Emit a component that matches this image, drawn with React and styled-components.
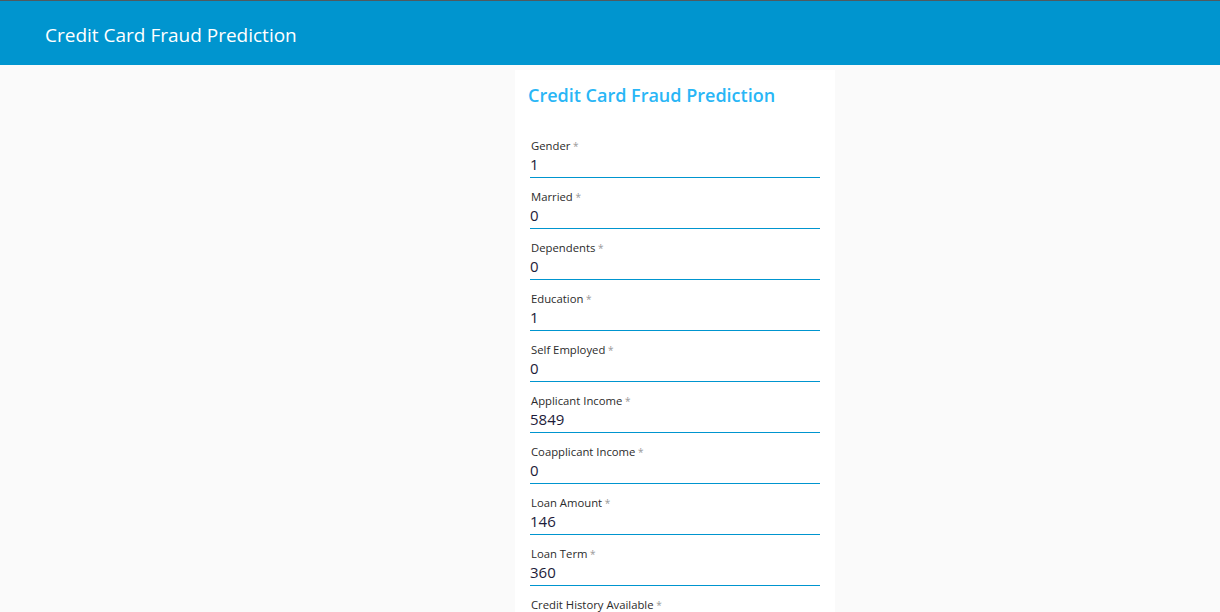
import React, { useState } from "react";
import styled, { createGlobalStyle } from "styled-components";

const fields = [
  { name: "gender", label: "Gender", value: "1" },
  { name: "married", label: "Married", value: "0" },
  { name: "dependents", label: "Dependents", value: "0" },
  { name: "education", label: "Education", value: "1" },
  { name: "selfEmployed", label: "Self Employed", value: "0" },
  { name: "applicantIncome", label: "Applicant Income", value: "5849" },
  { name: "coapplicantIncome", label: "Coapplicant Income", value: "0" },
  { name: "loanAmount", label: "Loan Amount", value: "146" },
  { name: "loanTerm", label: "Loan Term", value: "360" },
  { name: "creditHistory", label: "Credit History Available", value: "1" },
  { name: "propertyArea", label: "Property Area", value: "2" },
];

function App() {
  const [form, setForm] = useState(
    Object.fromEntries(fields.map((f) => [f.name, f.value]))
  );

  const onChange = (e) => setForm({ ...form, [e.target.name]: e.target.value });

  return (
    <>
      <GlobalStyle />
      <Header>
        <HeaderTitle>Credit Card Fraud Prediction</HeaderTitle>
      </Header>
      <Main>
        <Card>
          <Title>Credit Card Fraud Prediction</Title>
          <Form>
            {fields.map((f) => (
              <Field key={f.name}>
                <Label htmlFor={f.name}>
                  {f.label}
                  <Star> *</Star>
                </Label>
                <Input
                  id={f.name}
                  name={f.name}
                  value={form[f.name]}
                  onChange={onChange}
                />
              </Field>
            ))}
            <Submit type="button">Predict</Submit>
          </Form>
        </Card>
      </Main>
    </>
  );
}

const GlobalStyle = createGlobalStyle`
  body {
    margin: 0;
    background: #fafafa;
    font-family: "Open Sans", "Noto Sans", sans-serif;
  }
`;

const Header = styled.header`
  display: flex;
  align-items: center;
  box-sizing: border-box;
  height: 65px;
  padding: 3px 45px 0;
  background: #0095cf;
  border-top: 1px solid #4f5a60;
`;

const HeaderTitle = styled.h1`
  margin: 0;
  font-size: 19px;
  font-weight: 400;
  color: #fff;
`;

const Main = styled.main`
  display: grid;
  grid-template-columns: 515fr 320px 385fr;
  padding-top: 5px;
`;

const Card = styled.div`
  grid-column: 2;
  box-sizing: border-box;
  background: #fff;
  padding: 13px 15px 20px 13px;
`;

const Title = styled.h2`
  margin: 0 0 20px;
  font-size: 18px;
  line-height: 24px;
  font-weight: 600;
  color: #29b6f6;
`;

const Form = styled.form`
  display: flex;
  flex-direction: column;
  padding-left: 2px;
`;

const Field = styled.div`
  display: flex;
  flex-direction: column;
  padding-top: 11px;
`;

const Label = styled.label`
  font-size: 11.3px;
  line-height: 16px;
  color: #2b2b2b;
  padding-left: 1px;
`;

const Star = styled.span`
  color: #999;
  font-size: 10px;
`;

const Input = styled.input`
  box-sizing: border-box;
  height: 24px;
  padding: 0 0 4px;
  border: none;
  border-bottom: 1px solid #0095cf;
  background: transparent;
  font-family: inherit;
  font-size: 15px;
  color: #1d1b3a;
  outline: none;
`;

const Submit = styled.button`
  margin-top: 20px;
  height: 36px;
  border: none;
  background: #0095cf;
  color: #fff;
  font-family: inherit;
  font-size: 14px;
`;

export default App;
